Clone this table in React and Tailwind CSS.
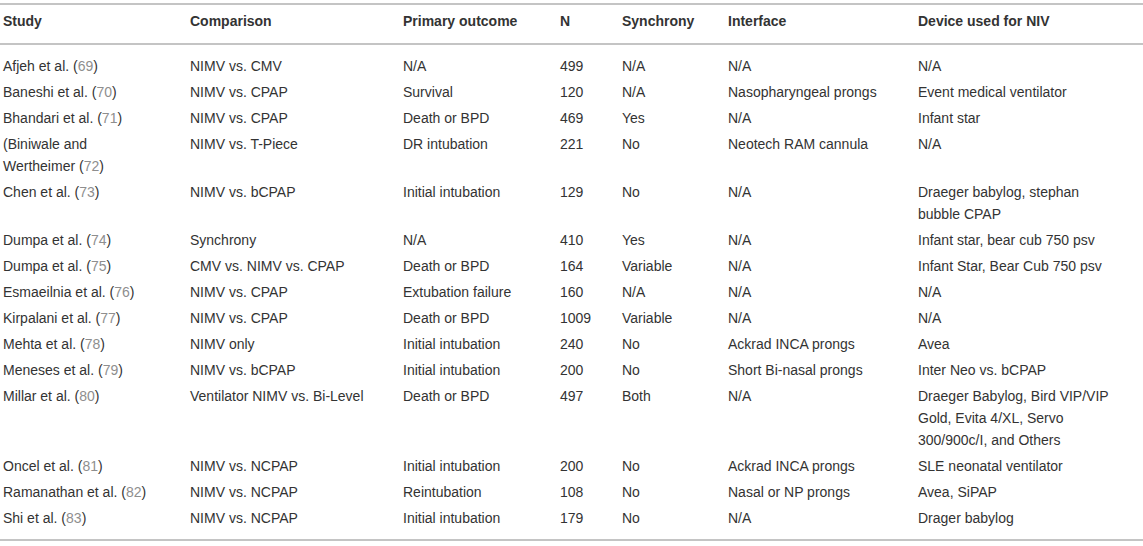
import React from 'react';

const cols = [
  { label: 'Study', w: 'w-[187px]' },
  { label: 'Comparison', w: 'w-[213px]' },
  { label: 'Primary outcome', w: 'w-[157px]' },
  { label: 'N', w: 'w-[62px]' },
  { label: 'Synchrony', w: 'w-[106px]' },
  { label: 'Interface', w: 'w-[190px]' },
  { label: 'Device used for NIV', w: 'w-[228px]' },
];

// study: [name lines], ref
const rows = [
  [['Afjeh et al.'], 69, 'NIMV vs. CMV', 'N/A', '499', 'N/A', 'N/A', ['N/A']],
  [['Baneshi et al.'], 70, 'NIMV vs. CPAP', 'Survival', '120', 'N/A', 'Nasopharyngeal prongs', ['Event medical ventilator']],
  [['Bhandari et al.'], 71, 'NIMV vs. CPAP', 'Death or BPD', '469', 'Yes', 'N/A', ['Infant star']],
  [['(Biniwale and', 'Wertheimer'], 72, 'NIMV vs. T-Piece', 'DR intubation', '221', 'No', 'Neotech RAM cannula', ['N/A']],
  [['Chen et al.'], 73, 'NIMV vs. bCPAP', 'Initial intubation', '129', 'No', 'N/A', ['Draeger babylog, stephan', 'bubble CPAP']],
  [['Dumpa et al.'], 74, 'Synchrony', 'N/A', '410', 'Yes', 'N/A', ['Infant star, bear cub 750 psv']],
  [['Dumpa et al.'], 75, 'CMV vs. NIMV vs. CPAP', 'Death or BPD', '164', 'Variable', 'N/A', ['Infant Star, Bear Cub 750 psv']],
  [['Esmaeilnia et al.'], 76, 'NIMV vs. CPAP', 'Extubation failure', '160', 'N/A', 'N/A', ['N/A']],
  [['Kirpalani et al.'], 77, 'NIMV vs. CPAP', 'Death or BPD', '1009', 'Variable', 'N/A', ['N/A']],
  [['Mehta et al.'], 78, 'NIMV only', 'Initial intubation', '240', 'No', 'Ackrad INCA prongs', ['Avea']],
  [['Meneses et al.'], 79, 'NIMV vs. bCPAP', 'Initial intubation', '200', 'No', 'Short Bi-nasal prongs', ['Inter Neo vs. bCPAP']],
  [['Millar et al.'], 80, 'Ventilator NIMV vs. Bi-Level', 'Death or BPD', '497', 'Both', 'N/A', ['Draeger Babylog, Bird VIP/VIP', 'Gold, Evita 4/XL, Servo', '300/900c/I, and Others']],
  [['Oncel et al.'], 81, 'NIMV vs. NCPAP', 'Initial intubation', '200', 'No', 'Ackrad INCA prongs', ['SLE neonatal ventilator']],
  [['Ramanathan et al.'], 82, 'NIMV vs. NCPAP', 'Reintubation', '108', 'No', 'Nasal or NP prongs', ['Avea, SiPAP']],
  [['Shi et al.'], 83, 'NIMV vs. NCPAP', 'Initial intubation', '179', 'No', 'N/A', ['Drager babylog']],
];

function Study({ lines, refNo }) {
  return (
    <>
      {lines.map((l, i) => (
        <React.Fragment key={i}>
          {i > 0 && <br />}
          {l}
          {i === lines.length - 1 && (
            <> (<span className="text-[#8e8e8e]">{refNo}</span>)</>
          )}
        </React.Fragment>
      ))}
    </>
  );
}

export default function App() {
  return (
    <div className="w-[1143px] h-[546px] bg-white pt-[3px] font-['Liberation_Sans',Arial,sans-serif] text-[14px] leading-[22px] text-[#333]">
      <div className="border-t-2 border-b-2 border-[#c4c4c4]">
        <table className="table-fixed border-collapse w-full text-left">
          <thead>
            <tr>
              {cols.map((c) => (
                <th key={c.label} className={`${c.w} pl-[3px] pt-[5px] pb-[11px] font-bold align-top border-b-2 border-[#c4c4c4]`}>
                  {c.label}
                </th>
              ))}
            </tr>
          </thead>
          <tbody>
            {rows.map((r, i) => {
              const pad = i === 0 ? 'pt-[10px] pb-[2px]' : i === rows.length - 1 ? 'pt-[2px] pb-[10px]' : 'pt-[2px] pb-[2px]';
              return (
                <tr key={i}>
                  <td className={`pl-[3px] align-top ${pad}`}>
                    <Study lines={r[0]} refNo={r[1]} />
                  </td>
                  {r.slice(2, 7).map((v, j) => (
                    <td key={j} className={`pl-[3px] align-top whitespace-nowrap ${pad}`}>{v}</td>
                  ))}
                  <td className={`pl-[3px] align-top ${pad}`}>
                    {r[7].map((l, k) => (
                      <React.Fragment key={k}>
                        {k > 0 && <br />}
                        {l}
                      </React.Fragment>
                    ))}
                  </td>
                </tr>
              );
            })}
          </tbody>
        </table>
      </div>
    </div>
  );
}
